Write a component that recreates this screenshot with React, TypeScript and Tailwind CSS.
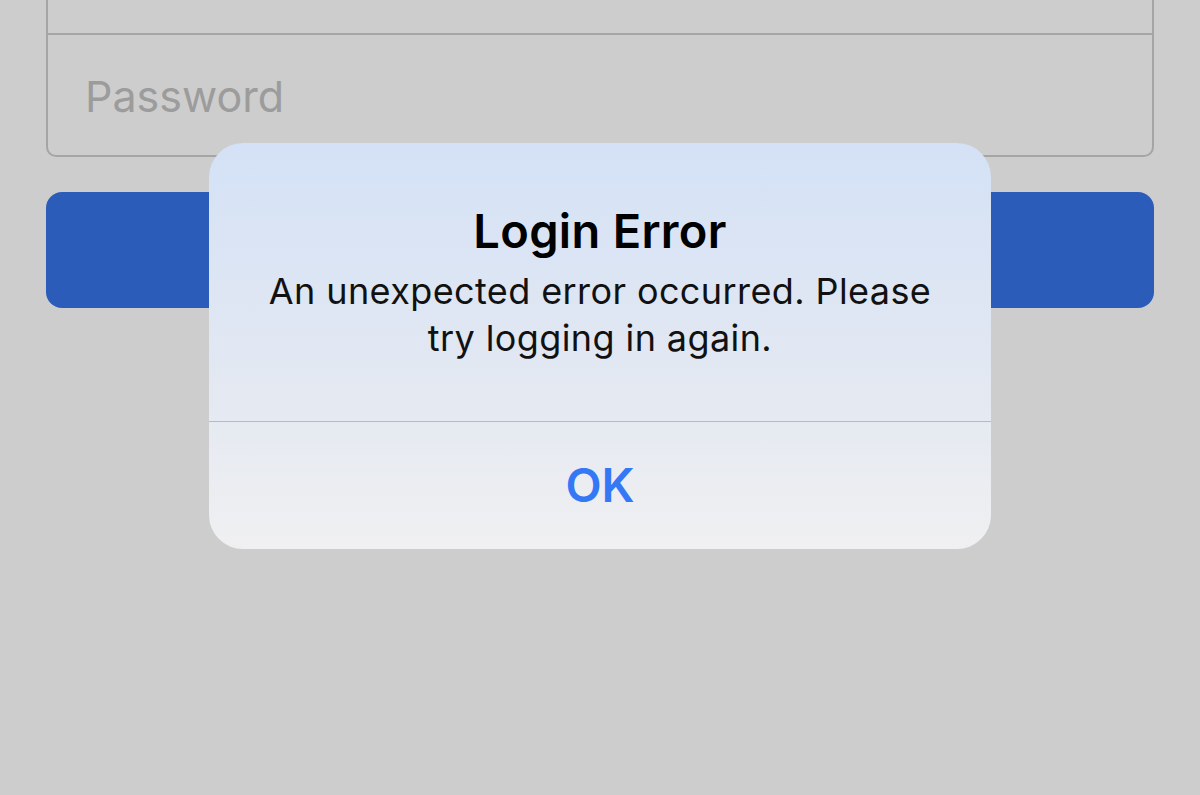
import React from "react";

export default function App() {
  return (
    <div
      className="relative w-[1200px] h-[795px] overflow-hidden bg-[#cdcdcd]"
      style={{ fontFamily: "Inter, 'Noto Sans', sans-serif" }}
    >
      <div className="flex flex-col px-[46px]">
        <div className="mt-[-60px] rounded-[10px] border-2 border-[#a5a5a5] flex flex-col">
          <div className="h-[93px] border-b-2 border-[#a5a5a5]" />
          <div className="h-[120px] flex items-center pl-[37px] pt-[3px]">
            <span className="text-[43px] text-[#9c9c9c]">Password</span>
          </div>
        </div>
        <div className="mt-[35px] h-[116px] rounded-[16px] bg-[#2c5cb9]" />
      </div>

      <div className="absolute left-[209px] top-[143px] w-[782px] h-[406px] rounded-[34px] overflow-hidden flex flex-col bg-gradient-to-b from-[#d4e1f6] via-[#e6eaf1] via-70% to-[#f0f0f2]">
        <div className="h-[278px] flex flex-col items-center pt-[60px]">
          <div className="text-[47px] font-semibold text-black leading-[56px] tracking-[0.3px]">Login Error</div>
          <div className="mt-[9px] text-[36px] text-[#111] leading-[47px] tracking-[0.4px] text-center">
            An unexpected error occurred. Please
            <br />
            try logging in again.
          </div>
        </div>
        <div className="h-px bg-[#b6bac2]" />
        <div className="flex-1 flex items-center justify-center">
          <span className="text-[47px] font-semibold text-[#3478f6]">OK</span>
        </div>
      </div>
    </div>
  );
}
